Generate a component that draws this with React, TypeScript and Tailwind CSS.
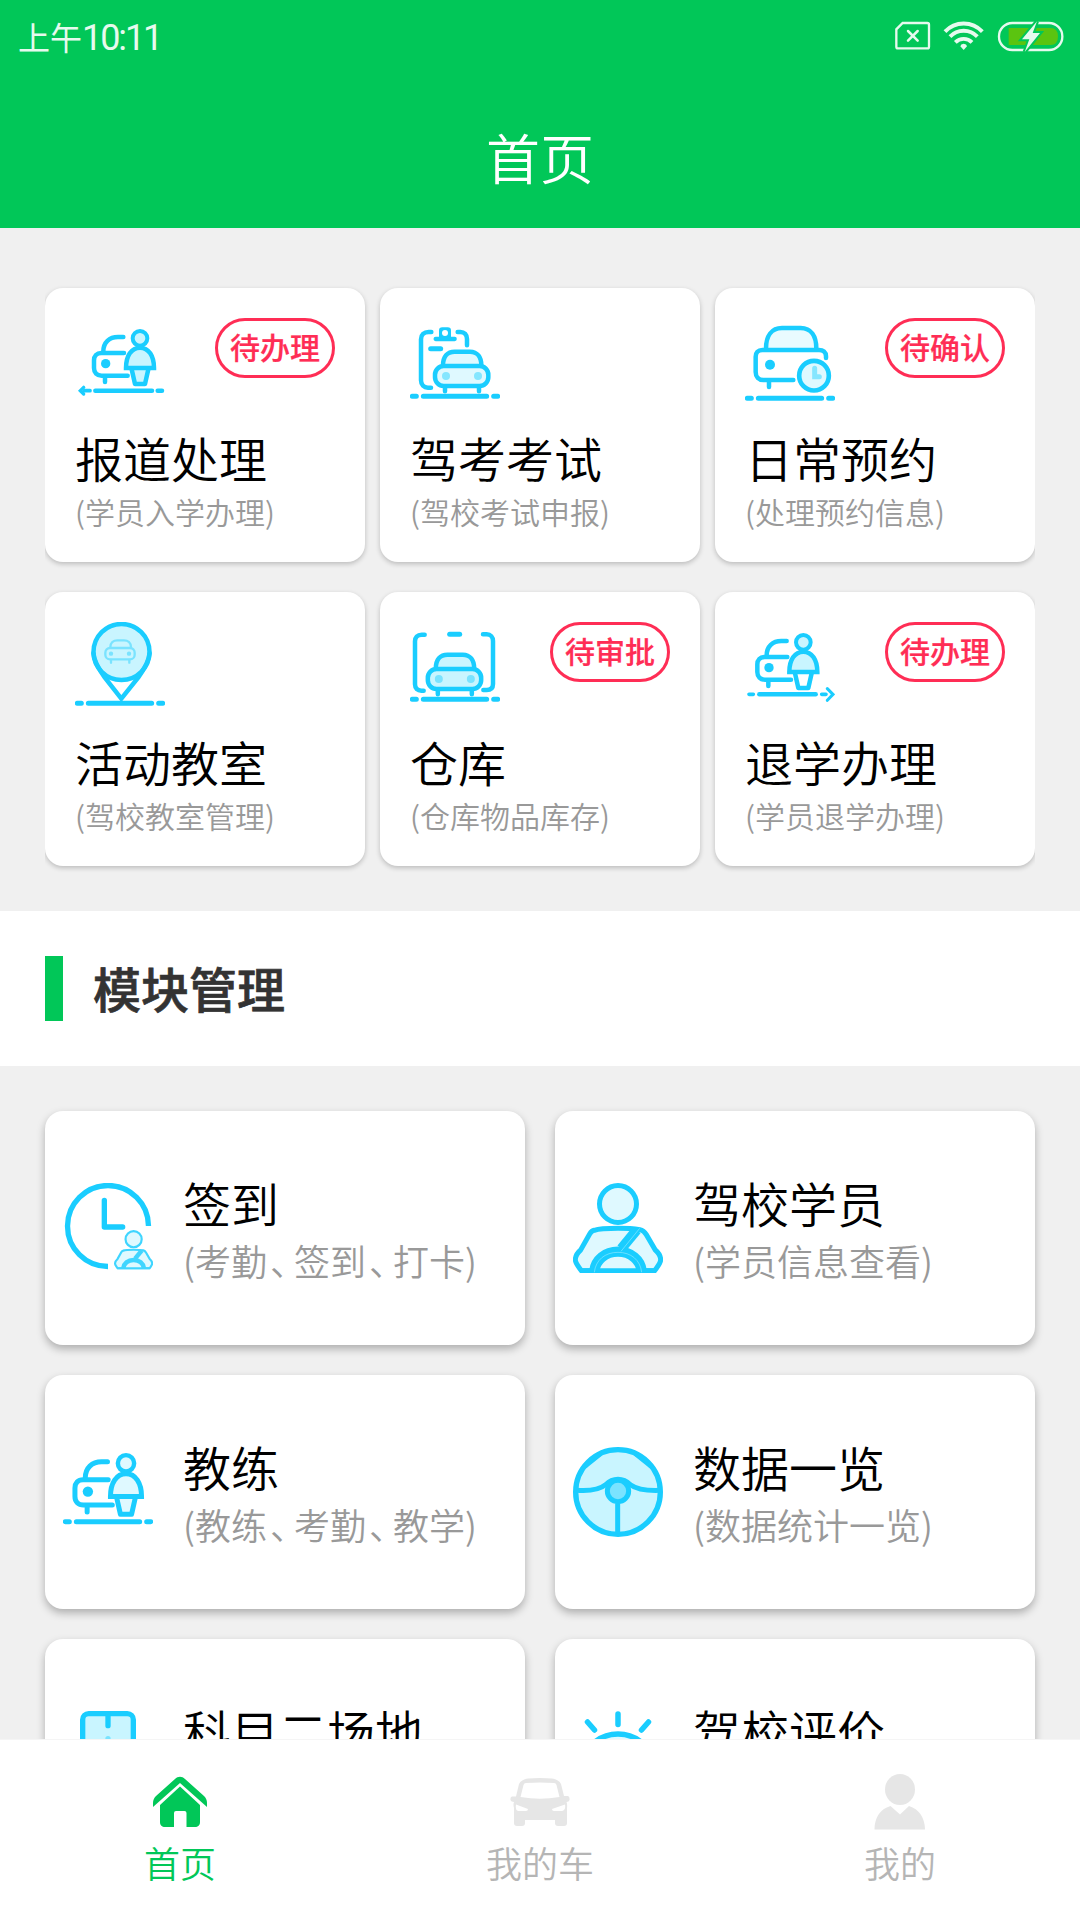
import type { ReactNode } from 'react'

interface QuickEntry {
  title: string
  note: string
  badge?: string
  icon: ReactNode
}

interface ModuleEntry {
  title: string
  note?: string
  icon: ReactNode
}

interface TabEntry {
  label: string
  active?: boolean
  icon: ReactNode
}

const CYAN = '#1acdff'
const CYAN_MID = '#7ae3ff'
const CYAN_LIGHT = '#c9f5ff'
const CYAN_PALE = '#dff9ff'

function Icon({ viewBox, children }: { viewBox: string; children: ReactNode }) {
  return (
    <svg
      viewBox={viewBox}
      className="h-[90px] w-[90px] shrink-0"
      fill="none"
      stroke={CYAN}
      strokeWidth={13.5}
      strokeLinecap="round"
      aria-hidden="true"
    >
      {children}
    </svg>
  )
}

// dash - long line - dash under most of the icons
function Ground({ x, y }: { x: number; y: number }) {
  return (
    <path
      d={`M${x + 7} ${y}h12M${x + 40} ${y}h190M${x + 251} ${y}h12`}
      strokeWidth={15}
    />
  )
}

function CoachBesideCar({ skirt = CYAN_LIGHT, fill = CYAN_LIGHT }: { skirt?: string; fill?: string }) {
  return (
    <>
      <path d="M250 171H234C208 171 190 187 190 214" />
      <path d="M252 219H184C170 219 162 228 162 241V264C162 278 171 287 185 287H263" />
      <circle cx="197" cy="251" r="14" fill={CYAN} stroke="none" />
      <path d="M195 292V306" />
      <path d="M275 268L285 312H315L325 268" fill={skirt} strokeLinejoin="round" />
      <circle cx="300" cy="175" r="22" fill={fill} strokeWidth={12} />
      <path d="M258 264C258 228 274 203 300 203C326 203 342 228 342 264Z" fill={fill} />
    </>
  )
}

function FrontCar({ fill, lamp }: { fill: string; lamp: string }) {
  return (
    <>
      <path d="M219 256C219 230 232 215 254 215H300C322 215 334 232 334 256" fill={fill} />
      <rect x="195" y="258" width="160" height="60" rx="26" fill={fill} />
      <g fill={lamp} stroke="none">
        <circle cx="228" cy="288" r="12" />
        <circle cx="324" cy="288" r="12" />
      </g>
      <path d="M225 322V334M327 322V334" />
    </>
  )
}

function Driver({ line = '#8de9ff', stroke = CYAN }: { line?: string; stroke?: string }) {
  return (
    <g stroke={stroke} strokeLinecap="butt">
      <circle cx="234" cy="312" r="55.5" strokeWidth={15} fill={CYAN_PALE} />
      <path
        d="M163 391C180 385 210 385 234 385C262 385 280 386 300 389C310 391 314 396 319 404L346 450C359 461 362 472 362 480C361 490 356 495 344 512H124C112 495 107 490 106 480C106 472 109 461 122 450L149 402C153 395 157 392 163 391Z"
        strokeWidth={15}
        fill={CYAN_PALE}
      />
      <path d="M290 390L244 446" strokeWidth={30} />
      <path d="M163 512C167 480 195 455 234 455C273 455 301 480 305 512" strokeWidth={31} fill={CYAN_PALE} />
      <path d="M122 512H346" strokeWidth={14} />
      <path d="M299 385L243 454M163 517C167 480 195 457 234 457C273 457 301 480 305 517" stroke={line} strokeWidth={2} />
    </g>
  )
}

function CheckInIcon() {
  return (
    <Icon viewBox="105 114 270 270">
      <CoachBesideCar />
      <path d="M166 332H336M353 332H366" />
      <path d="M133 332H150" strokeWidth={11} />
      <path d="M131 322L121 332L131 342" strokeWidth={10} />
    </Icon>
  )
}

function ExamIcon() {
  return (
    <Icon viewBox="120 114 270 270">
      <path d="M184 156H176C162 156 153 164 153 178V301C153 315 162 323 174 323H183" />
      <path d="M263 156H271C283 156 291 164 291 177V196" />
      <rect x="207" y="142" width="36" height="38" rx="10" fill={CYAN} stroke="none" />
      <circle cx="225" cy="159" r="9" fill="#fff" stroke="none" />
      <path d="M197 177H254" strokeWidth={13} />
      <path d="M182 206H212" strokeWidth={15} />
      <FrontCar fill={CYAN_PALE} lamp="#85e6ff" />
      <Ground x={120} y={349} />
    </Icon>
  )
}

function BookingIcon() {
  return (
    <Icon viewBox="135 114 270 270">
      <path d="M198 206C198 168 215 144 246 144H302C333 144 349 168 349 206" fill="#e9fbff" />
      <path d="M378 234V229C378 216 369 210 357 210H187C174 210 167 218 167 230V276C167 291 176 300 190 300H280" />
      <circle cx="210" cy="254" r="15" fill={CYAN} stroke="none" />
      <path d="M207 306V321" />
      <circle cx="342" cy="287" r="44.5" strokeWidth={14} fill={CYAN_PALE} />
      <path d="M344 265V290H358" stroke="#85e6ff" strokeWidth={15} />
      <Ground x={135} y={355} />
    </Icon>
  )
}

function ClassroomIcon() {
  return (
    <Icon viewBox="105 96 270 270">
      <circle cx="244.5" cy="186" r="84" fill={CYAN_LIGHT} />
      <path d="M160 190C163 218 178 240 194 262L244 326L295 262C311 240 326 218 329 190" />
      <g stroke={CYAN_MID} strokeWidth={7}>
        <path d="M211 172C211 159 220 151 232 151H252C264 151 273 159 273 172" />
        <rect x="196" y="174" width="88" height="34" rx="14" />
        <path d="M213 210V218M268 210V218" />
        <g fill={CYAN_MID} stroke="none">
          <circle cx="213" cy="191" r="6.5" />
          <circle cx="267" cy="191" r="6.5" />
        </g>
      </g>
      <Ground x={105} y={340} />
    </Icon>
  )
}

function WarehouseIcon() {
  return (
    <Icon viewBox="120 96 270 270">
      <path d="M164 134H155C142 134 135 142 135 154V283C135 296 143 302 154 302H161" />
      <path d="M339 133H350C362 133 369 141 369 153V282C369 294 362 300 350 300H340" />
      <path d="M239 133H269" strokeWidth={15} />
      <g transform="translate(-21.5 -21)">
        <FrontCar fill={CYAN_LIGHT} lamp={CYAN_MID} />
      </g>
      <Ground x={120} y={328} />
    </Icon>
  )
}

function QuitIcon() {
  return (
    <Icon viewBox="135 96 270 270">
      <g transform="translate(10 -18)">
        <CoachBesideCar skirt="#fff" />
      </g>
      <path d="M178 313H347" />
      <path d="M147 313H160M365 313H378" strokeWidth={11} />
      <path d="M382 296L399 313L382 331" strokeWidth={9} />
    </Icon>
  )
}

function ClockInIcon() {
  return (
    <Icon viewBox="69 249 270 270">
      <path d="M325.5 378A121.5 121.5 0 1 0 204 499.5" strokeWidth={16} strokeLinecap="butt" />
      <path d="M193 301V381H248" strokeWidth={16} strokeLinejoin="round" />
      <g transform="translate(222 390) scale(.436) translate(-99 -249)">
        <Driver stroke="#3fd5ff" line="#3fd5ff" />
      </g>
    </Icon>
  )
}

function StudentIcon() {
  return (
    <Icon viewBox="99 249 270 270">
      <Driver />
    </Icon>
  )
}

function CoachIcon() {
  return (
    <Icon viewBox="69 231 270 270">
      <g transform="translate(-75 84.5) scale(1.11 1.117)">
        <CoachBesideCar skirt={CYAN_PALE} fill={CYAN_PALE} />
      </g>
      <Ground x={69} y={455} />
    </Icon>
  )
}

function WheelIcon() {
  return (
    <Icon viewBox="99 1041 270 270">
      <circle cx="234" cy="1176" r="127" strokeWidth={16} fill={CYAN_LIGHT} />
      <path d="M138 1098L180 1064M288 1064L330 1098" strokeWidth={12} />
      <path
        d="M110 1171C150 1174 180 1168 197 1154C208 1143 220 1138 234 1138C248 1138 260 1143 271 1154C290 1168 325 1172 358 1171"
        strokeWidth={15}
        strokeLinecap="butt"
      />
      <circle cx="234" cy="1173" r="32" strokeWidth={15} fill={CYAN_MID} />
      <path d="M233 1210V1300" strokeWidth={15} strokeLinecap="butt" />
    </Icon>
  )
}

function FieldIcon() {
  return (
    <Icon viewBox="69 1023 270 270">
      <rect x="128" y="1031" width="152" height="240" rx="18" strokeWidth={16} fill={CYAN_LIGHT} />
      <path d="M204 1036V1067" strokeWidth={16} />
      <path d="M204 1106V1140" stroke={CYAN_MID} strokeWidth={16} />
    </Icon>
  )
}

function ReviewIcon() {
  return (
    <Icon viewBox="0 0 90 90">
      <g strokeWidth={5.5}>
        <path d="M45 3V13.5M14.5 11L21.5 19M75.5 11L68.5 19" />
        <circle cx="45" cy="60" r="37" fill={CYAN_PALE} />
      </g>
    </Icon>
  )
}

const quickEntries: QuickEntry[] = [
  { title: '报道处理', note: '(学员入学办理)', badge: '待办理', icon: <CheckInIcon /> },
  { title: '驾考考试', note: '(驾校考试申报)', icon: <ExamIcon /> },
  { title: '日常预约', note: '(处理预约信息)', badge: '待确认', icon: <BookingIcon /> },
  { title: '活动教室', note: '(驾校教室管理)', icon: <ClassroomIcon /> },
  { title: '仓库', note: '(仓库物品库存)', badge: '待审批', icon: <WarehouseIcon /> },
  { title: '退学办理', note: '(学员退学办理)', badge: '待办理', icon: <QuitIcon /> },
]

const moduleEntries: ModuleEntry[] = [
  { title: '签到', note: '(考勤、签到、打卡)', icon: <ClockInIcon /> },
  { title: '驾校学员', note: '(学员信息查看)', icon: <StudentIcon /> },
  { title: '教练', note: '(教练、考勤、教学)', icon: <CoachIcon /> },
  { title: '数据一览', note: '(数据统计一览)', icon: <WheelIcon /> },
  { title: '科目二场地', icon: <FieldIcon /> },
  { title: '驾校评价', icon: <ReviewIcon /> },
]

const tabs: TabEntry[] = [
  {
    label: '首页',
    active: true,
    icon: (
      <>
        <path d="M153 1807V1803C153 1800 154 1798 156 1796L175 1779C178 1776 182 1776 185 1779L204 1796C206 1798 207 1800 207 1803V1807L180 1783Z" />
        <path d="M180 1786.5L200 1805V1822C200 1825.5 198 1827 195 1827H186.5V1813Q186.5 1811 184.5 1811H176Q174 1811 174 1813V1827H165C162 1827 160 1825.5 160 1822V1805Z" />
      </>
    ),
  },
  {
    label: '我的车',
    icon: (
      <path
        transform="translate(-360 0)"
        fillRule="evenodd"
        d="M528 1778.5Q540 1777.5 552 1778.5Q559 1779.5 561 1784L564 1796H568Q570 1797 569.5 1800Q569 1802 566.5 1802Q567.5 1804 567 1808V1823Q567 1826 564 1826H558Q555 1826 555 1823V1820H525V1823Q525 1826 522 1826H517Q514 1826 514 1823V1808Q513 1804 514 1802Q511 1802 510.5 1800Q510 1797 512 1796.5H516L519 1784Q521 1779.5 528 1778.5ZM526 1783Q524 1783 523.5 1785L520.5 1797Q540 1800.5 559.5 1797L556.5 1785Q556 1783 554 1783Q540 1782 526 1783ZM516 1804.5L528 1809Q528 1811 526 1811H518Q515 1810 516 1804.5ZM565 1804.5L552 1809Q552 1811 554 1811H562Q566 1810 565 1804.5Z"
      />
    ),
  },
  {
    label: '我的',
    icon: (
      <g transform="translate(-720 0)">
        <ellipse cx="900" cy="1789.5" rx="15" ry="15.5" />
        <path d="M874.5 1829.5C874.5 1818 880 1809 890.5 1806L900 1814.5L909 1806C919 1809 925 1818 925 1829.5Z" />
      </g>
    ),
  },
]

function StatusBar() {
  return (
    <div className="flex h-[72px] items-center justify-between pl-[18px] pr-4 text-[#e6faee]">
      <p className="text-[32px] leading-[72px] font-normal">
        上午<span className="font-[Roboto] text-[36px] leading-none tracking-[-2.1px]">10:11</span>
      </p>
      <svg viewBox="105 60 507 96" className="h-8 w-[169px]" fill="none" stroke="currentColor" aria-hidden="true">
        <path d="M128 69H202Q207 69 207 74V140Q207 145 202 145H114Q109 145 109 140V88Z" strokeWidth={7} />
        <path d="M144 93L173 122M173 93L144 122" strokeWidth={7.5} strokeLinecap="round" />
        <g strokeWidth={11.5}>
          <path d="M255 95A76 76 0 0 1 367 95" />
          <path d="M270 110A56 56 0 0 1 352 110" />
          <path d="M286 127A35 35 0 0 1 336 127" />
        </g>
        <path d="M311 131Q320 132 321 139L311 150L301 139Q302 132 311 131Z" fill="currentColor" stroke="none" />
        <rect x="417" y="69" width="190" height="81" rx="40" strokeWidth={7} />
        <path d="M446 84H572Q594 84 594 109.5Q594 135 572 135H446Z" fill="#5bc410" stroke="none" />
        <path
          d="M531 64L486 118H508L494 156L540 99H518Z"
          fill="currentColor"
          stroke="#01c758"
          strokeWidth={12}
          paintOrder="stroke"
        />
      </svg>
    </div>
  )
}

// the enumeration comma sits tighter than a full-width glyph
function Note({ text }: { text: string }) {
  return (
    <>
      {text.split('、').map((part, index) => (
        <span key={part}>
          {index > 0 && <span className="ml-[3px] tracking-[-12px]">、</span>}
          {part}
        </span>
      ))}
    </>
  )
}

function QuickCard({ entry }: { entry: QuickEntry }) {
  return (
    <div className="h-[274px] rounded-[18px] bg-white p-[30px] shadow-[0_2px_5px_rgba(0,0,0,0.22)]">
      <div className="flex items-start justify-between">
        {entry.icon}
        {entry.badge && (
          <span className="flex h-[60px] w-[120px] items-center justify-center rounded-full border-3 border-[#ff2d55] pb-1 text-[30px] leading-none font-medium text-[#ff2d55] [-webkit-text-stroke:0.2px]">
            {entry.badge}
          </span>
        )}
      </div>
      <h2 className="mt-[17px] text-5xl leading-[64px] text-black">{entry.title}</h2>
      <p className="mt-0.5 text-3xl leading-10 text-[#999]">{entry.note}</p>
    </div>
  )
}

function ModuleCard({ entry }: { entry: ModuleEntry }) {
  return (
    <div className="flex h-[234px] items-center gap-[30px] rounded-[18px] bg-white pl-[18px] shadow-[0_4px_8px_rgba(0,0,0,0.28)]">
      {entry.icon}
      <div className="h-[116px]">
        <h3 className="text-5xl leading-[64px] text-black">{entry.title}</h3>
        {entry.note && (
          <p className="mt-px text-4xl leading-[50px] whitespace-nowrap text-[#999]">
            <Note text={entry.note} />
          </p>
        )}
      </div>
    </div>
  )
}

export default function App() {
  return (
    <div className="flex h-[1920px] w-[1080px] flex-col overflow-hidden bg-[#f0f0f0] font-['Noto_Sans_CJK_SC',sans-serif] font-[350]">
      <header className="h-[228px] shrink-0 bg-[#01c758]">
        <StatusBar />
        <h1 className="pt-[45px] text-center text-[54px] leading-[80px] text-white">首页</h1>
      </header>

      <main className="min-h-0 flex-1 overflow-hidden">
        <section className="px-[45px] pt-[60px] pb-[45px]">
          <div className="grid grid-cols-3 gap-x-[15px] gap-y-[30px] overflow-x-clip">
            {quickEntries.map((entry) => (
              <QuickCard key={entry.title} entry={entry} />
            ))}
          </div>
        </section>

        <section className="flex h-[155px] items-center gap-[30px] bg-white px-[45px]">
          <span className="h-[65px] w-[18px] bg-[#01c758]" />
          <h2 className="pb-1 text-5xl leading-[64px] font-medium text-[#333] [-webkit-text-stroke:0.7px]">模块管理</h2>
        </section>

        <section className="grid grid-cols-2 gap-[30px] px-[45px] pt-[45px]">
          {moduleEntries.map((entry) => (
            <ModuleCard key={entry.title} entry={entry} />
          ))}
        </section>
      </main>

      <nav className="grid h-[181px] shrink-0 grid-cols-3 border-t border-[#f5f5f5] bg-white">
        {tabs.map((tab) => (
          <div
            key={tab.label}
            className={`flex flex-col items-center pt-[30px] ${tab.active ? 'text-[#01c758]' : 'text-[#b5b5b5]'}`}
          >
            <svg
              viewBox="150 1770 60 64"
              className={`h-16 w-[60px] ${tab.active ? 'fill-[#01c758]' : 'fill-[#e6e6e6]'}`}
              aria-hidden="true"
            >
              {tab.icon}
            </svg>
            <span className="mt-[3px] text-4xl leading-[50px]">{tab.label}</span>
          </div>
        ))}
      </nav>
    </div>
  )
}
